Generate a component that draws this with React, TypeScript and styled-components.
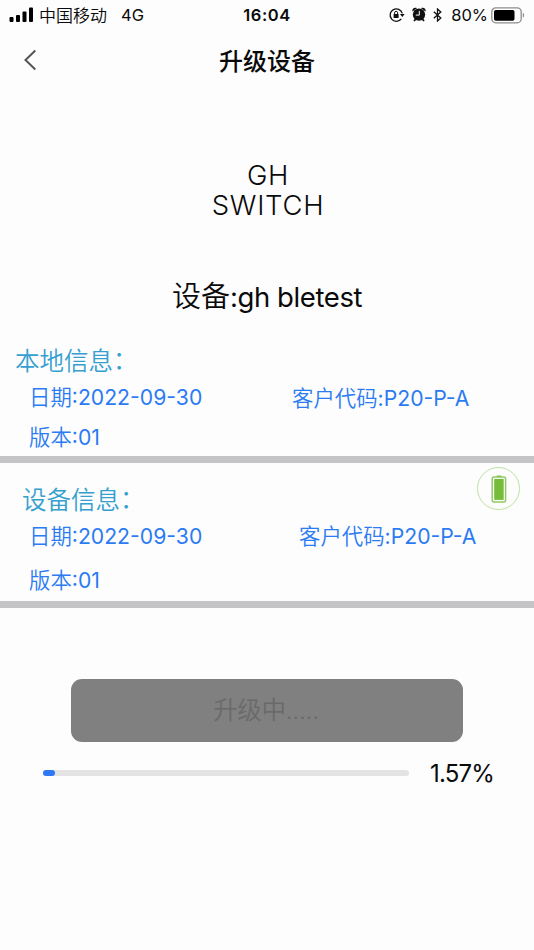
import React from 'react'
import styled, { createGlobalStyle } from 'styled-components'

const GlobalStyle = createGlobalStyle`
  * {
    box-sizing: border-box;
  }

  body {
    margin: 0;
    background: #fdfdfd;
    color: #0a0a0a;
    font-family: Inter, 'Noto Sans CJK SC', sans-serif;
  }
`

const Screen = styled.div`
  width: 534px;
  height: 950px;
  overflow: hidden;
  white-space: nowrap;
`

const StatusBar = styled.header`
  display: grid;
  grid-template-columns: 1fr auto 1fr;
  align-items: center;
  height: 30px;
  padding: 0 9px;
  font-size: 17px;
  line-height: 30px;
`

const StatusGroup = styled.div<{ $end?: boolean }>`
  display: flex;
  align-items: center;
  height: 30px;
  justify-content: ${({ $end }) => ($end ? 'flex-end' : 'flex-start')};
`

const StatusIcons = styled.div`
  display: flex;
  align-items: center;
  gap: 7px;
  padding-bottom: 1px;
`

const Carrier = styled.span`
  margin-left: 5px;
  padding-top: 1px;
  font-size: 17px;
  font-weight: 350;
`

const Network = styled.span`
  margin-left: 14px;
  font-size: 16.5px;
`

const Clock = styled.span`
  font-weight: 600;
  font-size: 16.5px;
  letter-spacing: 0.6px;
  line-height: 29px;
`

const Percent = styled.span`
  margin: 0 3px 0 9px;
  font-size: 16.5px;
`

const NavBar = styled.nav`
  display: grid;
  grid-template-columns: 60px 1fr 60px;
  align-items: center;
  height: 60px;
`

const BackButton = styled.button`
  display: flex;
  padding: 0 0 0 23px;
  border: 0;
  background: none;
`

const Title = styled.h1`
  margin: 0;
  padding-top: 3px;
  text-align: center;
  font-size: 24px;
  font-weight: 500;
  line-height: 57px;
`

const Brand = styled.div`
  display: flex;
  flex-direction: column;
  align-items: center;
  margin-top: 71px;
  padding-left: 2px;
  font-size: 27.5px;
  font-weight: 350;
  line-height: 29.5px;
  letter-spacing: 0.7px;
`

const DeviceName = styled.div`
  height: 60px;
  margin-top: 47px;
  text-align: center;
  font-size: 29px;
  font-weight: 350;
  line-height: 60px;
`

const DeviceId = styled.span`
  font-size: 27.5px;
  font-weight: 400;
  letter-spacing: -0.4px;
`

const Panel = styled.section<{ $height: number }>`
  position: relative;
  height: ${({ $height }) => $height}px;
  border-bottom: 7px solid #c4c4c6;
`

const PanelTitle = styled.h2<{ $indent: number; $top: number }>`
  margin: 0;
  padding: ${({ $top, $indent }) => `${$top}px 0 0 ${$indent}px`};
  height: ${({ $top }) => $top + 36}px;
  color: #35a0cf;
  font-size: 24.5px;
  font-weight: 350;
  line-height: 36px;
`

const Colon = styled.span`
  line-height: 1;
  vertical-align: 1px;
`

const Fields = styled.div<{ $split: number; $gap: number }>`
  display: grid;
  grid-template-columns: ${({ $split }) => $split}px 1fr;
  row-gap: ${({ $gap }) => $gap}px;
  padding-left: 29px;
  color: #2b7bf3;
  font-size: 21.4px;
  font-weight: 350;
  line-height: 36px;
`

const FieldCell = styled.div<{ $drop: number }>`
  height: 36px;
  padding-top: ${({ $drop }) => $drop}px;
`

const FieldValue = styled.span`
  font-size: 21.2px;
  font-weight: 400;
`

const BatteryBadge = styled.div`
  position: absolute;
  top: 4px;
  right: 14px;
  display: flex;
  align-items: center;
  justify-content: center;
  width: 43px;
  height: 43px;
  border: 1px solid #bfe0a2;
  border-radius: 50%;
`

const UpgradeButton = styled.button`
  display: block;
  width: 392px;
  height: 63px;
  margin: 71px 0 0 71px;
  padding: 0 2px 0 0;
  border: 0;
  border-radius: 11px;
  background: #808080;
  color: #6a6a6a;
  font-family: inherit;
  font-size: 24.5px;
  font-weight: 350;
  line-height: 63px;
  letter-spacing: -0.3px;
`

const ProgressRow = styled.div`
  display: flex;
  align-items: center;
  height: 40px;
  margin-top: 11px;
  padding-left: 43px;
`

const Track = styled.div`
  width: 366px;
  height: 6px;
  border-radius: 3px;
  background: #e3e3e3;
`

const Fill = styled.div`
  min-width: 12px;
  height: 6px;
  border-radius: 3px;
  background: #2f78f5;
`

const ProgressValue = styled.span`
  margin-left: 21px;
  font-size: 24px;
  letter-spacing: -0.8px;
`

const SignalIcon = () => (
  <svg width="25" height="16" viewBox="0 0 25 16">
    <rect x="0.5" y="10" width="4" height="5" rx="1" />
    <rect x="7" y="8" width="4" height="7" rx="1" />
    <rect x="13.5" y="4.5" width="4" height="10.5" rx="1" />
    <rect x="20" y="0.5" width="4" height="14.5" rx="1" />
  </svg>
)

const BackIcon = () => (
  <svg width="14" height="22" viewBox="0 0 14 22" fill="none" stroke="#555" strokeWidth="2">
    <path d="M12.3 1.5 2.5 11l9.8 9.5" />
  </svg>
)

const LockIcon = () => (
  <svg width="16" height="16" viewBox="0 0 16 16" fill="none" stroke="#111" strokeWidth="1.3">
    <path d="M12.3 11.8A6.2 6.2 0 1 1 13.3 6.4" />
    <path d="M10.9 7h4.8l-2.4 3z" fill="#111" stroke="none" />
    <rect x="4.6" y="7" width="5" height="4" rx="0.5" fill="#111" stroke="none" />
    <path d="M5.6 7V5.8a1.5 1.5 0 0 1 3 0V7" strokeWidth="1" />
  </svg>
)

const AlarmIcon = () => (
  <svg width="14" height="15" viewBox="0 0 14 15">
    <circle cx="7" cy="7.6" r="6.2" fill="#111" />
    <path d="M.4 4.6C-.2 1.6 2.6-.2 5 1.2zM13.6 4.6C14.2 1.6 11.4-.2 9 1.2z" fill="#111" />
    <path d="m2 14 2-2.4M12 14l-2-2.4" stroke="#111" strokeWidth="1.8" />
    <path d="M7.3 3.9v4.2H3.8" fill="none" stroke="#fff" strokeWidth="1" />
  </svg>
)

const BluetoothIcon = () => (
  <svg width="9" height="14" viewBox="0 0 9 14" fill="none" stroke="#111" strokeWidth="1.3">
    <path d="m.8 3.8 7 6.2-3.3 3V1l3.3 3-7 6.2" />
  </svg>
)

const StatusBatteryIcon = () => (
  <svg width="34" height="17" viewBox="0 0 34 17">
    <rect x="0.8" y="0.8" width="29.4" height="15" rx="4" fill="none" stroke="#8d8d8d" strokeWidth="1.3" />
    <rect x="3" y="3" width="20.5" height="10.8" rx="1.8" fill="#000" />
    <path d="M31.8 5.8c1.8.8 1.8 4.2 0 5z" fill="#8d8d8d" />
  </svg>
)

const DeviceBatteryIcon = () => (
  <svg width="16" height="28" viewBox="0 0 16 28">
    <rect x="5.5" y="0.5" width="5" height="2" rx="0.8" fill="#79bd3d" />
    <rect x="1.2" y="2" width="13.4" height="25" rx="2" fill="#fff" stroke="#91ca62" strokeWidth="1.5" />
    <rect x="3.2" y="3.9" width="9.5" height="21" fill="#76bc3b" />
  </svg>
)

interface FieldProps {
  label: string
  value: string
  drop?: number
}

const Field: React.FC<FieldProps> = ({ label, value, drop = 0 }) => (
  <FieldCell $drop={drop}>
    {label}
    <FieldValue>:{value}</FieldValue>
  </FieldCell>
)

const progress = 1.57

const App: React.FC = () => {
  return (
    <>
      <GlobalStyle />
      <Screen>
        <StatusBar>
          <StatusGroup>
            <SignalIcon />
            <Carrier>中国移动</Carrier>
            <Network>4G</Network>
          </StatusGroup>
          <Clock>16:04</Clock>
          <StatusGroup $end>
            <StatusIcons>
              <LockIcon />
              <AlarmIcon />
              <BluetoothIcon />
            </StatusIcons>
            <Percent>80%</Percent>
            <StatusBatteryIcon />
          </StatusGroup>
        </StatusBar>
        <NavBar>
          <BackButton aria-label="返回">
            <BackIcon />
          </BackButton>
          <Title>升级设备</Title>
        </NavBar>
        <Brand>
          <span>GH</span>
          <span>SWITCH</span>
        </Brand>
        <DeviceName>
          设备<DeviceId>:gh bletest</DeviceId>
        </DeviceName>
        <Panel $height={136}>
          <PanelTitle $indent={15} $top={16}>
            本地信息<Colon>：</Colon>
          </PanelTitle>
          <Fields $split={263} $gap={4}>
            <Field label="日期" value="2022-09-30" />
            <Field label="客户代码" value="P20-P-A" drop={1} />
            <Field label="版本" value="01" />
          </Fields>
        </Panel>
        <Panel $height={145}>
          <BatteryBadge>
            <DeviceBatteryIcon />
          </BatteryBadge>
          <PanelTitle $indent={22} $top={19}>
            设备信息<Colon>：</Colon>
          </PanelTitle>
          <Fields $split={270} $gap={8}>
            <Field label="日期" value="2022-09-30" />
            <Field label="客户代码" value="P20-P-A" />
            <Field label="版本" value="01" />
          </Fields>
        </Panel>
        <UpgradeButton disabled>升级中.....</UpgradeButton>
        <ProgressRow>
          <Track>
            <Fill style={{ width: `${progress}%` }} />
          </Track>
          <ProgressValue>{progress}%</ProgressValue>
        </ProgressRow>
      </Screen>
    </>
  )
}

export default App
